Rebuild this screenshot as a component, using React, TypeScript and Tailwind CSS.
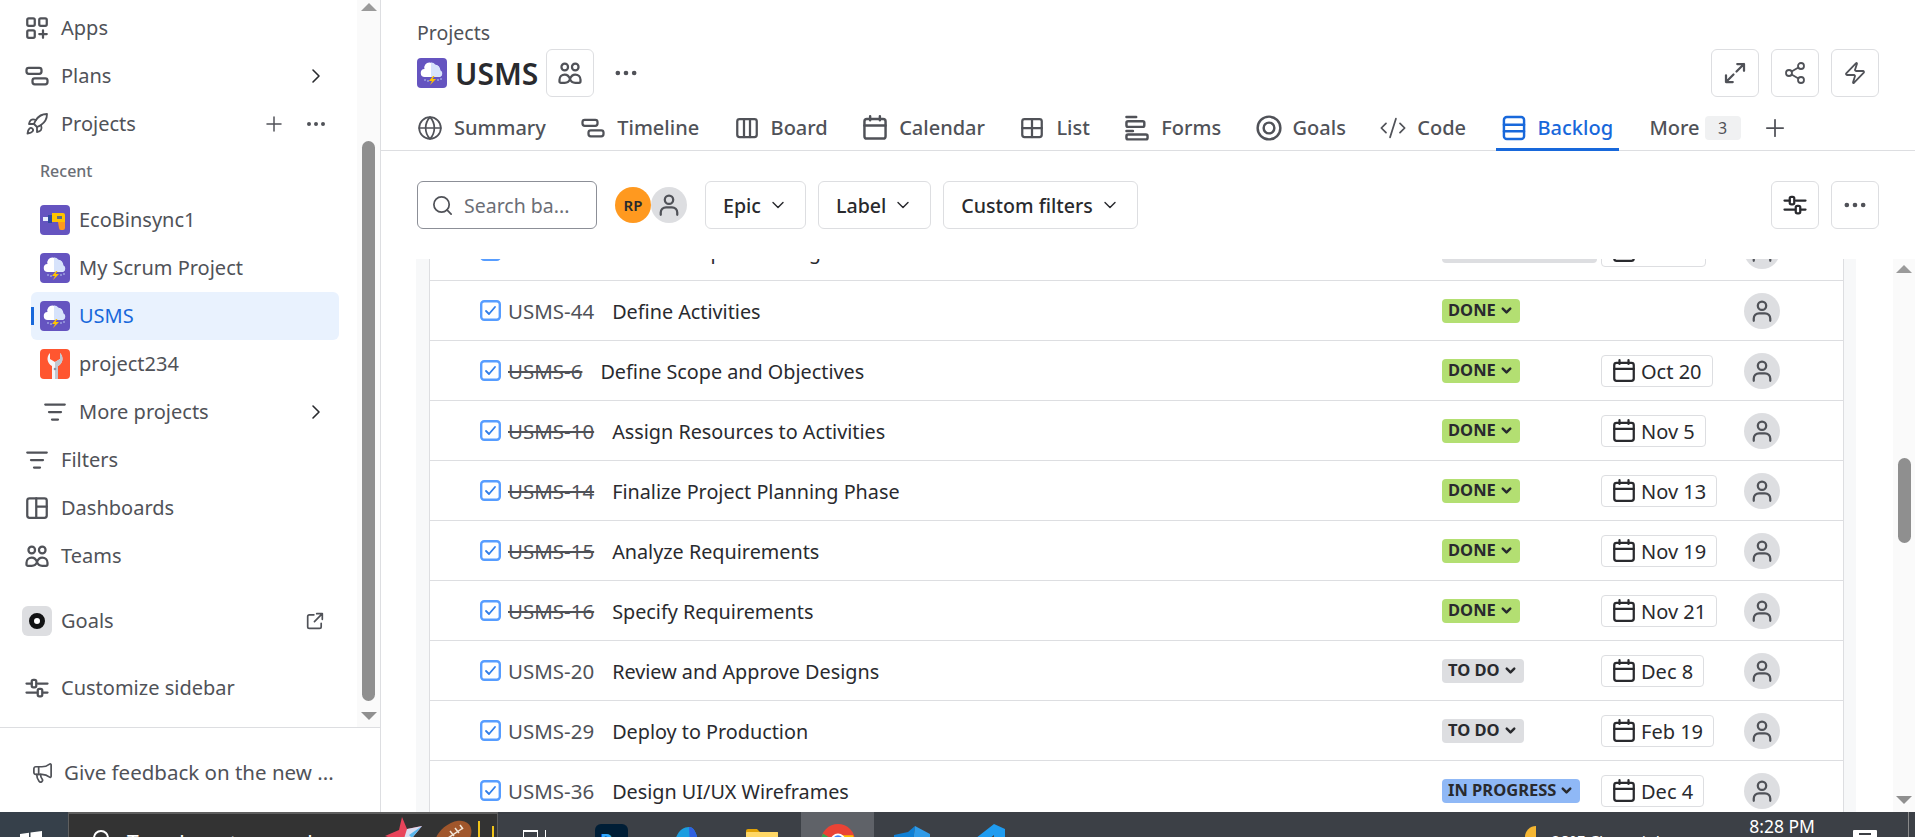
import React from 'react';
import { ChevronDown, ChevronRight, CodeXml, Ellipsis, Globe, Megaphone, Plus, Rocket, Search, Share2, Zap } from 'lucide-react';

type IconProps = { className?: string };

function Glyph({ className = 'w-6 h-6 text-[#505258]', children }: IconProps & { children: React.ReactNode }) {
  return (
    <svg viewBox="0 0 16 16" fill="none" stroke="currentColor" strokeWidth="1.5" strokeLinecap="round" strokeLinejoin="round" className={`shrink-0 ${className}`}>
      {children}
    </svg>
  );
}

const AppsIcon = (p: IconProps) => (
  <Glyph {...p}>
    <rect x="1.5" y="1.5" width="5" height="5" rx="1" />
    <rect x="9.5" y="1.5" width="5" height="5" rx="1" />
    <rect x="1.5" y="9.5" width="5" height="5" rx="1" />
    <path d="M12 9.5v5M9.5 12h5" />
  </Glyph>
);
const TimelineIcon = (p: IconProps) => (
  <Glyph {...p}>
    <rect x="1" y="2.5" width="10" height="4" rx="1.5" />
    <rect x="5" y="9.5" width="10" height="4" rx="1.5" />
  </Glyph>
);
const FilterIcon = (p: IconProps) => (
  <Glyph {...p}>
    <path d="M1.5 3h13M4 8h8M6 13h4" />
  </Glyph>
);
const DashboardIcon = (p: IconProps) => (
  <Glyph {...p}>
    <rect x="1.5" y="1.5" width="13" height="13" rx="1.5" />
    <path d="M7.5 1.5v13M7.5 7h7" />
  </Glyph>
);
const TeamsIcon = (p: IconProps) => (
  <Glyph {...p}>
    <circle cx="4.5" cy="4" r="2.2" />
    <circle cx="11.5" cy="4" r="2.2" />
    <path d="M1 14v-1.500C1 10.500 2.500 9 4.500 9s3 1.500 3.500 3 1.500 2.500 3.500 2.500H14a1 1 0 0 0 1-1v-1C15 10.500 13.500 9 11.500 9s-3 1.500-3.500 3-1.500 2.500-3.500 2.500H2a1 1 0 0 1-1-.500z" />
  </Glyph>
);
const SlidersIcon = (p: IconProps) => (
  <Glyph {...p}>
    <path d="M1 5h3.500M8.500 5H15M1 11h7M12 11h3" />
    <rect x="4.500" y="2.500" width="3" height="5" rx="1" />
    <rect x="8.500" y="8.500" width="3" height="5" rx="1" />
  </Glyph>
);
const ExternalIcon = (p: IconProps) => (
  <Glyph {...p}>
    <path d="M7 2.500H3A1.500 1.500 0 0 0 1.500 4v9A1.500 1.500 0 0 0 3 14.500h9a1.500 1.500 0 0 0 1.500-1.500V10" />
    <path d="M9.500 1.500h5v5M14.500 1.500 7.500 8.500" />
  </Glyph>
);
const BoardIcon = (p: IconProps) => (
  <Glyph {...p}>
    <rect x="1.500" y="2" width="13" height="12" rx="1.500" />
    <path d="M6 2v12M10 2v12" />
  </Glyph>
);
const CalendarIcon = (p: IconProps) => (
  <Glyph {...p}>
    <rect x="1.500" y="2.500" width="13" height="12" rx="1.500" />
    <path d="M1.500 6.500h13M5 .800v2.500M11 .800v2.500" />
  </Glyph>
);
const ListIcon = (p: IconProps) => (
  <Glyph {...p}>
    <rect x="1.500" y="2" width="13" height="12" rx="1.500" />
    <path d="M1.500 8h13M8 2v12" />
  </Glyph>
);
const FormsIcon = (p: IconProps) => (
  <Glyph {...p}>
    <path d="M1.500 1.200h6" />
    <rect x="1.500" y="3.800" width="11" height="3.500" rx="1" />
    <path d="M1.500 9.800h4" />
    <rect x="1.500" y="12" width="13" height="3" rx="1" />
  </Glyph>
);
const TargetIcon = (p: IconProps) => (
  <Glyph {...p}>
    <circle cx="8" cy="8" r="7" />
    <circle cx="8" cy="8" r="3.300" />
  </Glyph>
);
const BacklogIcon = (p: IconProps) => (
  <Glyph {...p}>
    <rect x="1.800" y="1.200" width="12.400" height="13.600" rx="1.800" />
    <path d="M1.800 6h12.400M1.800 10h12.400" />
  </Glyph>
);
const ExpandIcon = (p: IconProps) => (
  <Glyph {...p}>
    <path d="M9.500 2h4.500v4.500M14 2 9 7M6.500 14H2V9.500M2 14l5-5" />
  </Glyph>
);
const PersonIcon = (p: IconProps) => (
  <Glyph {...p}>
    <circle cx="8" cy="4.500" r="2.800" />
    <path d="M2.500 14.500v-1.500a3.500 3.500 0 0 1 3.500-3.500h4a3.500 3.500 0 0 1 3.500 3.500v1.500" />
  </Glyph>
);

function StormAvatar({ className = 'w-[30px] h-[30px]' }: IconProps) {
  return (
    <svg viewBox="0 0 30 30" className={`shrink-0 ${className}`}>
      <rect width="30" height="30" rx="4" fill="#6554c0" />
      <path d="M8 19a4 4 0 0 1-.5-8 5 5 0 0 1 5-6.500c2 0 3.500.8 4.500 2.500 3-.8 5.500 1.800 6 5.500A3.500 3.500 0 0 1 22.500 19z" fill="#ffffff" />
      <path d="M14 4.500c2 0 3.500.8 4.500 2.500 2.500-.5 4.500 1.800 5 5.500A3.500 3.500 0 0 1 22.500 19H14z" fill="#d7e3fb" />
      <path d="M16 18l-4 5h3l-2 4 6-6h-3.500l2-3z" fill="#ffc400" />
      <path d="M8 21v2M11 22v2M21 21v2M24 20v2" stroke="#b9c7f0" strokeWidth="1" />
    </svg>
  );
}

function DrillAvatar() {
  return (
    <svg viewBox="0 0 30 30" className="w-[30px] h-[30px] shrink-0">
      <rect width="30" height="30" rx="4" fill="#6554c0" />
      <rect x="3" y="12" width="5" height="4" fill="#e8eefc" />
      <rect x="8" y="10" width="4" height="8" fill="#2d4a9e" />
      <path d="M12 8h11a2 2 0 0 1 2 2v7H12z" fill="#ffc400" />
      <rect x="17" y="11" width="5" height="3" fill="#5e6c84" />
      <path d="M18 17h7v6a2 2 0 0 1-2 2h-2a2 2 0 0 1-2-2z" fill="#ff991f" />
    </svg>
  );
}

function WrenchAvatar() {
  return (
    <svg viewBox="0 0 30 30" className="w-[30px] h-[30px] shrink-0">
      <rect width="30" height="30" rx="4" fill="#ff5630" />
      <path d="M10 4a8 8 0 0 0 2 13v13h6V17a8 8 0 0 0 2-13v6l-5 3-5-3z" fill="#f4f5f7" />
      <path d="M15 13l5-3V4a8 8 0 0 1-2 13v13h-3z" fill="#c1c7d0" />
      <circle cx="15" cy="20" r="1.300" fill="#8993a4" />
    </svg>
  );
}

function NavRow({ icon, label, right }: { icon: React.ReactNode; label: string; right?: React.ReactNode }) {
  return (
    <div className="h-12 flex items-center pl-[25px] text-[#505258]">
      <span className="w-6 flex justify-center mr-3">{icon}</span>
      <span className="flex-1">{label}</span>
      {right}
    </div>
  );
}

function ProjectRow({ icon, label, active }: { icon: React.ReactNode; label: string; active?: boolean }) {
  return (
    <div className={`relative h-12 ml-[31px] mr-[18px] pl-[9px] flex items-center gap-[9px] rounded-md ${active ? 'bg-[#e9f2fe] text-[#1868db]' : 'text-[#505258]'}`}>
      {active && <span className="absolute left-0 top-[15px] w-[3px] h-[18px] bg-[#1868db]" />}
      {icon}
      <span>{label}</span>
    </div>
  );
}

function Sidebar() {
  return (
    <aside className="w-[381px] shrink-0 flex flex-col border-r border-[#dddee1] text-[20px]">
      <div className="h-[728px] flex border-b border-[#dddee1]">
        <nav className="flex-1 pt-[4px]">
          <NavRow icon={<AppsIcon />} label="Apps" />
          <NavRow icon={<TimelineIcon />} label="Plans" right={<ChevronRight className="w-6 h-6 mr-[29px] text-[#292a2e]" strokeWidth={1.6} />} />
          <NavRow
            icon={<Rocket className="w-6 h-6 text-[#505258]" strokeWidth={1.8} />}
            label="Projects"
            right={
              <div className="flex items-center gap-[18px] mr-[29px]">
                <Plus className="w-6 h-6 text-[#505258]" strokeWidth={1.5} />
                <Ellipsis className="w-6 h-6 text-[#505258]" strokeWidth={2} />
              </div>
            }
          />
          <div className="h-12 flex items-center pl-10 pb-[2px] text-[16px] font-medium text-[#6b6e76]">Recent</div>
          <ProjectRow icon={<DrillAvatar />} label="EcoBinsync1" />
          <ProjectRow icon={<StormAvatar />} label="My Scrum Project" />
          <ProjectRow icon={<StormAvatar />} label="USMS" active />
          <ProjectRow icon={<WrenchAvatar />} label="project234" />
          <div className="h-12 flex items-center pl-[43px] text-[#505258]">
            <FilterIcon className="w-6 h-6 mr-[12px] text-[#505258]" />
            <span className="flex-1">More projects</span>
            <ChevronRight className="w-6 h-6 mr-[29px] text-[#292a2e]" strokeWidth={1.6} />
          </div>
          <NavRow icon={<FilterIcon />} label="Filters" />
          <NavRow icon={<DashboardIcon />} label="Dashboards" />
          <NavRow icon={<TeamsIcon />} label="Teams" />
          <div className="h-[30px] mt-[26px] flex items-center pl-[22px] text-[#505258]">
            <span className="w-[30px] h-[30px] mr-[9px] rounded-md bg-[#dddee1] flex items-center justify-center">
              <span className="w-[16px] h-[16px] rounded-full border-[5px] border-[#111213] bg-white" />
            </span>
            <span className="flex-1">Goals</span>
            <ExternalIcon className="w-[18px] h-[18px] mr-[33px] text-[#505258]" />
          </div>
          <div className="mt-[28px]">
            <NavRow icon={<SlidersIcon />} label="Customize sidebar" />
          </div>
        </nav>
        <div className="w-[23px] bg-[#fafafa] flex flex-col items-center">
          <span className="mt-[3px] mb-[130px] w-0 h-0 border-x-[8px] border-x-transparent border-b-[8px] border-b-[#9a9a9a]" />
          <span className="w-[13px] h-[560px] rounded-full bg-[#8f8f8f]" />
          <span className="mt-[11px] w-0 h-0 border-x-[8px] border-x-transparent border-t-[8px] border-t-[#8f8f8f]" />
        </div>
      </div>
      <div className="flex-1 flex items-center pl-[31px] pt-[5px] gap-[10px] text-[20.500px] text-[#505258]">
        <Megaphone className="w-[23px] h-[23px] text-[#505258]" strokeWidth={1.8} />
        <span>Give feedback on the new ...</span>
      </div>
    </aside>
  );
}

const tabs: { icon: React.ReactNode; label: string; active?: boolean }[] = [
  { icon: <Globe className="w-[26px] h-[26px] -mx-px" strokeWidth={1.6} />, label: 'Summary' },
  { icon: <TimelineIcon className="w-6 h-6" />, label: 'Timeline' },
  { icon: <BoardIcon className="w-6 h-6" />, label: 'Board' },
  { icon: <CalendarIcon className="w-[26px] h-[26px] -mx-px" />, label: 'Calendar' },
  { icon: <ListIcon className="w-6 h-6" />, label: 'List' },
  { icon: <FormsIcon className="w-[26px] h-[26px] -mx-px" />, label: 'Forms' },
  { icon: <TargetIcon className="w-[26px] h-[26px] -mx-px" />, label: 'Goals' },
  { icon: <CodeXml className="w-[28px] h-[28px] -mx-0.5" strokeWidth={1.5} />, label: 'Code' },
  { icon: <BacklogIcon className="w-[26px] h-[26px] -mx-px" />, label: 'Backlog', active: true },
];

function IconButton({ children }: { children: React.ReactNode }) {
  return <button className="w-12 h-12 rounded-md border border-[#dddee1] bg-white flex items-center justify-center text-[#505258]">{children}</button>;
}

function FilterButton({ label }: { label: string }) {
  return (
    <button className="h-12 px-[17px] rounded-md border border-[#dddee1] bg-white flex items-center gap-[7px] text-[19.600px] text-[#292a2e] font-medium">
      <span className="pt-[2px]">{label}</span>
      <ChevronDown className="w-5 h-5 text-[#292a2e]" strokeWidth={1.7} />
    </button>
  );
}

function Header() {
  return (
    <header className="shrink-0">
      <div className="px-9 pt-[21px]">
        <div className="h-6 flex items-center text-[19.500px] text-[#505258]">Projects</div>
        <div className="h-12 mt-[4px] flex items-center">
          <StormAvatar className="w-[30px] h-[30px]" />
          <span className="ml-2 text-[30px] font-semibold text-[#292a2e]">USMS</span>
          <span className="ml-2 w-12 h-12 rounded-md border border-[#dddee1] flex items-center justify-center">
            <TeamsIcon className="w-6 h-6 text-[#505258]" />
          </span>
          <Ellipsis className="ml-[18px] w-7 h-7 text-[#505258]" strokeWidth={2} />
          <div className="ml-auto flex gap-3">
            <IconButton><ExpandIcon className="w-6 h-6" /></IconButton>
            <IconButton><Share2 className="w-6 h-6" strokeWidth={1.8} /></IconButton>
            <IconButton><Zap className="w-6 h-6" strokeWidth={1.8} /></IconButton>
          </div>
        </div>
      </div>
      <div className="h-[54px] border-b border-[#dddee1] flex items-stretch pl-[31px] text-[20px]">
        {tabs.map((t) => (
          <div
            key={t.label}
            className={`flex items-center gap-3 px-[6px] mr-[23.400px] -mb-px border-b-[3px] pt-[11px] ${t.active ? 'border-[#1868db] text-[#1868db]' : 'border-transparent text-[#505258]'}`}
          >
            {t.icon}
            <span className="font-medium">{t.label}</span>
          </div>
        ))}
        <div className="flex items-center pt-[8px] ml-[7px] text-[#505258]">
          <span className="font-medium">More</span>
          <span className="ml-[5px] w-9 h-[24px] rounded bg-[#f0f1f2] flex items-center justify-center text-[16px]">3</span>
          <Plus className="ml-[20px] w-7 h-7" strokeWidth={1.5} />
        </div>
      </div>
      <div className="h-12 mt-[30px] mb-[30px] px-9 flex items-center">
        <div className="w-[180px] h-12 rounded-md border border-[#8c8f97] flex items-center pl-[13px] gap-[10px] text-[19.500px] text-[#6b6e76]">
          <Search className="w-[23px] h-[23px] text-[#505258]" strokeWidth={1.8} />
          <span className="pt-[2px]">Search ba...</span>
        </div>
        <div className="ml-[18px] flex items-center">
          <span className="w-9 h-9 rounded-full bg-[#ff991f] flex items-center justify-center text-[15px] font-semibold text-[#292a2e]">RP</span>
          <span className="w-9 h-9 rounded-full bg-[#dddee1] flex items-center justify-center">
            <PersonIcon className="w-6 h-6 text-[#505258]" />
          </span>
        </div>
        <div className="ml-[18px] flex gap-3">
          <FilterButton label="Epic" />
          <FilterButton label="Label" />
          <FilterButton label="Custom filters" />
        </div>
        <div className="ml-auto flex gap-3">
          <IconButton><SlidersIcon className="w-6 h-6 text-[#292a2e]" /></IconButton>
          <IconButton><Ellipsis className="w-7 h-7 text-[#505258]" strokeWidth={2} /></IconButton>
        </div>
      </div>
    </header>
  );
}

type Status = 'DONE' | 'TO DO' | 'IN PROGRESS' | 'UNDER REVIEW';

const statusClass: Record<Status, string> = {
  DONE: 'bg-[#b3df72]',
  'TO DO': 'bg-[#dddee1]',
  'IN PROGRESS': 'bg-[#8fb8f6]',
  'UNDER REVIEW': 'bg-[#dddee1]',
};

const issues: { key: string; title: string; status: Status; date?: string; struck?: boolean }[] = [
  { key: 'USMS-43', title: 'Create Scope Planning', status: 'UNDER REVIEW', date: 'Nov 7' },
  { key: 'USMS-44', title: 'Define Activities', status: 'DONE' },
  { key: 'USMS-6', title: 'Define Scope and Objectives', status: 'DONE', date: 'Oct 20', struck: true },
  { key: 'USMS-10', title: 'Assign Resources to Activities', status: 'DONE', date: 'Nov 5', struck: true },
  { key: 'USMS-14', title: 'Finalize Project Planning Phase', status: 'DONE', date: 'Nov 13', struck: true },
  { key: 'USMS-15', title: 'Analyze Requirements', status: 'DONE', date: 'Nov 19', struck: true },
  { key: 'USMS-16', title: 'Specify Requirements', status: 'DONE', date: 'Nov 21', struck: true },
  { key: 'USMS-20', title: 'Review and Approve Designs', status: 'TO DO', date: 'Dec 8' },
  { key: 'USMS-29', title: 'Deploy to Production', status: 'TO DO', date: 'Feb 19' },
  { key: 'USMS-36', title: 'Design UI/UX Wireframes', status: 'IN PROGRESS', date: 'Dec 4' },
];

function IssueRow({ issue }: { issue: (typeof issues)[number] }) {
  return (
    <div className="h-[60px] shrink-0 border-b border-[#dddee1] flex items-center pl-[50px]">
      <svg viewBox="0 0 21 21" className="w-[21px] h-[21px] shrink-0 mr-[7px]">
        <rect x="1.200" y="1.200" width="18.600" height="18.600" rx="3" fill="none" stroke="#579dff" strokeWidth="2.400" />
        <path d="M6 11l3 3 6-7" fill="none" stroke="#2f7de8" strokeWidth="1.800" strokeLinecap="round" strokeLinejoin="round" />
      </svg>
      <span className={`pt-[2px] text-[20.500px] text-[#505258] mr-[18px] ${issue.struck ? 'line-through' : ''}`}>{issue.key}</span>
      <span className="pt-[2px] flex-1 text-[19.800px] text-[#292a2e]">{issue.title}</span>
      <div className="w-[159px] shrink-0 flex items-center">
        <span className={`inline-flex items-center h-6 px-[6px] gap-[3px] rounded whitespace-nowrap text-[16.500px] font-bold text-[#292a2e] ${statusClass[issue.status]}`}>
          {issue.status}
          <ChevronDown className="w-[15px] h-[15px]" strokeWidth={4} />
        </span>
      </div>
      <div className="w-[143px] shrink-0 flex items-center">
        {issue.date && (
          <span className="inline-flex items-center h-8 px-[10px] gap-[5px] rounded border border-[#dddee1] text-[#292a2e]">
            <CalendarIcon className="w-6 h-6 text-[#292a2e]" />
            <span className="pt-[2px]">{issue.date}</span>
          </span>
        )}
      </div>
      <span className="w-9 h-9 mr-[63px] shrink-0 rounded-full bg-[#dddee1] flex items-center justify-center">
        <PersonIcon className="w-6 h-6 text-[#505258]" />
      </span>
    </div>
  );
}

function Backlog() {
  return (
    <div className="flex-1 min-h-0 flex text-[20px]">
      <div className="w-[35px] shrink-0" />
      <div className="w-[14px] shrink-0 bg-[#f7f8f9] border-r border-[#dddee1]" />
      <div className="flex-1 min-w-0 overflow-hidden">
        <div className="-mt-[38px] flex flex-col">
          {issues.map((i) => (
            <IssueRow key={i.key} issue={i} />
          ))}
        </div>
      </div>
      <div className="w-[13px] shrink-0 bg-[#f7f8f9] border-l border-[#dddee1]" />
      <div className="w-[37px] shrink-0" />
      <div className="w-[22px] shrink-0 bg-[#fafafa] flex flex-col items-center">
        <span className="mt-[6px] mb-[185px] w-0 h-0 border-x-[8px] border-x-transparent border-b-[8px] border-b-[#9a9a9a]" />
        <span className="w-[13px] h-[85px] rounded-full bg-[#8f8f8f]" />
        <span className="mt-[253px] w-0 h-0 border-x-[8px] border-x-transparent border-t-[8px] border-t-[#8f8f8f]" />
      </div>
    </div>
  );
}

function Taskbar() {
  return (
    <footer className="h-[25px] shrink-0 overflow-hidden flex items-start bg-[#3c4046] text-white">
      <div className="w-[68px] h-full shrink-0 bg-[#36404a] pl-[19px] pt-[18px]">
        <svg viewBox="0 0 24 24" className="w-6 h-6" fill="#ffffff">
          <path d="M1 4l9-1.300V11H1zM11.500 2.500 23 1v10H11.500zM1 12.500h9v8.500l-9-1.300zM11.500 12.500H23V23l-11.500-1.500z" />
        </svg>
      </div>
      <div className="w-[430px] h-full shrink-0 bg-[#333333] border-t-2 border-x border-[#5f5f5f] flex items-start">
        <span className="ml-6 mt-4 w-4 h-4 rounded-full border-2 border-white shrink-0" />
        <span className="ml-[18px] mt-[17px] text-[21px] leading-6 whitespace-nowrap text-white">Type here to search</span>
        <svg viewBox="0 0 37 30" className="ml-auto mt-[3px] w-[37px] h-[30px] shrink-0">
          <path d="M17 0l5 12 15-3-10 12-9 4-18-6 14-6z" fill="#e8445a" />
          <path d="M22 12l15-3-10 12-9 4z" fill="#d9dcef" />
          <path d="M37 9l-10 12-3-3z" fill="#59b6ec" />
        </svg>
        <svg viewBox="0 0 37 30" className="ml-[13px] mt-[6px] w-[37px] h-[30px] shrink-0">
          <ellipse cx="18" cy="18" rx="14" ry="21" fill="#a0562b" transform="rotate(50 18 18)" />
          <path d="M10 20 28 8M15 11l4 5M20 8l4 5M25 5l3 4" stroke="#f2e6d8" strokeWidth="1.500" fill="none" />
        </svg>
        <span className="ml-[6px] mt-[7px] w-[2px] h-6 bg-[#f0c419] shrink-0" />
        <span className="ml-3 mt-3 w-[2px] h-6 bg-[#f0c419] shrink-0" />
        <span className="w-[3px] shrink-0" />
      </div>
      <div className="flex items-start flex-1 h-full">
        <span className="ml-[25px] mt-[18px] w-[15px] h-[20px] border-t-2 border-x border-white shrink-0" />
        <span className="ml-[7px] mt-[18px] w-px h-5 bg-white shrink-0" />
        <span className="ml-[49px] mt-3 w-[33px] h-9 rounded-md bg-[#001e36] text-[#31a8ff] text-[20px] font-bold leading-none pl-[5px] pt-[7px] shrink-0">Ps</span>
        <svg viewBox="0 0 31 30" className="ml-11 mt-[14px] w-[31px] h-[30px] shrink-0">
          <path d="M1 22C4 6 10 1 17 1c4 0 7 4 9 14z" fill="#1b9de0" />
          <path d="M17 1c4 0 7 4 9 14l-8 4z" fill="#2f5fe0" />
          <circle cx="26" cy="16" r="5" fill="#a85cd8" />
        </svg>
        <svg viewBox="0 0 32 30" className="ml-[43px] mt-[17px] w-8 h-[30px] shrink-0">
          <path d="M0 2a2 2 0 0 1 2-2h9l3 3h18v24H0z" fill="#e0a106" />
          <rect x="0" y="3" width="32" height="24" rx="1" fill="#ffd766" />
        </svg>
        <div className="ml-[23px] w-[73px] h-full bg-[#5f6268] flex justify-center pt-3 shrink-0">
          <svg viewBox="0 0 36 36" className="w-[34px] h-[34px]">
            <circle cx="18" cy="18" r="18" fill="#ea4335" />
            <path d="M2 10a18 18 0 0 0 12 25l8-12z" fill="#34a853" />
            <path d="M18 12h16a18 18 0 0 1-14 24l-4-16z" fill="#fbbc04" />
            <circle cx="18" cy="18" r="8" fill="#ffffff" />
            <circle cx="18" cy="18" r="6" fill="#4285f4" />
          </svg>
        </div>
        <svg viewBox="0 0 36 30" className="ml-5 mt-[14px] w-9 h-[30px] shrink-0">
          <path d="M0 9 14 6 21 0l-3 26L0 22z" fill="#0f7fd4" />
          <path d="M21 0l15 8v16l-18 2z" fill="#2f9be8" />
        </svg>
        <svg viewBox="0 0 36 30" className="ml-[39px] mt-3 w-9 h-[30px] shrink-0">
          <path d="M25 0 36 5v24L25 33V11L10 23l-8-5z" fill="#1f9cf0" />
        </svg>
        <div className="ml-auto flex items-start h-full">
          <span className="mt-[14px] w-[11px] h-6 rounded-l-full bg-[#f5b631] shrink-0" />
          <span className="ml-[15px] mt-5 w-[158px] text-[16px] leading-5 whitespace-nowrap">28°F Clear night</span>
          <span className="ml-10 mt-[2px] text-[17.500px] leading-6 whitespace-nowrap">8:28 PM</span>
          <span className="ml-[38px] mt-[18px] w-6 h-6 bg-white rounded-[1px] shrink-0 flex justify-center pt-[3px]">
            <span className="w-3 h-[2px] bg-[#3c3f44]" />
          </span>
          <span className="ml-[31px] w-px h-full bg-[#8a8a8a]" />
          <span className="w-[6px]" />
        </div>
      </div>
    </footer>
  );
}

export default function App() {
  return (
    <div className="w-[1915px] h-[837px] overflow-hidden flex flex-col bg-white font-['Noto_Sans',sans-serif]">
      <div className="h-[812px] flex">
        <Sidebar />
        <main className="flex-1 min-w-0 flex flex-col text-[20px]">
          <Header />
          <Backlog />
        </main>
      </div>
      <Taskbar />
    </div>
  );
}
